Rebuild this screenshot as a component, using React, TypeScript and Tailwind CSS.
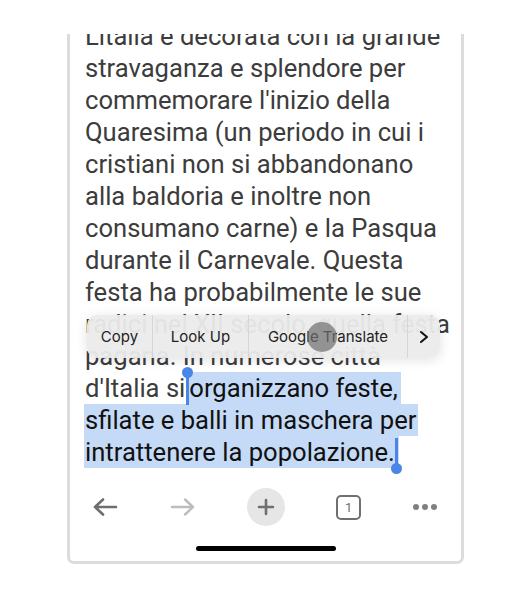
const LINES = [
  'Litalia e decorata con la grande',
  'stravaganza e splendore per',
  "commemorare l'inizio della",
  'Quaresima (un periodo in cui i',
  'cristiani non si abbandonano',
  'alla baldoria e inoltre non',
  'consumano carne) e la Pasqua',
  'durante il Carnevale. Questa',
  'festa ha probabilmente le sue',
  'radici nel XII secolo, quella festa',
  'pagana. In numerose città',
];

function Toolbar() {
  return (
    <div className="flex items-center justify-between h-[78px] pl-[23px] pr-[24px]">
      <svg width="25" height="24" viewBox="0 0 25 24" fill="none" stroke="#6f6f6f" strokeWidth="2.6" strokeLinecap="round" strokeLinejoin="round">
        <path d="M2 12h21M10 4.5L2 12l8 7.5" />
      </svg>
      <svg width="25" height="24" viewBox="0 0 25 24" fill="none" stroke="#bdbdbd" strokeWidth="2.4" strokeLinecap="round" strokeLinejoin="round">
        <path d="M2 12h21M15 4.5l8 7.5-8 7.5" />
      </svg>
      <div className="w-[38px] h-[38px] rounded-full bg-[#e6e6e6] flex items-center justify-center">
        <svg width="20" height="20" viewBox="0 0 20 20" fill="none" stroke="#6f6f6f" strokeWidth="2.6" strokeLinecap="round">
          <path d="M10 3v14M3 10h14" />
        </svg>
      </div>
      <div className="w-[25px] h-[25px] rounded-[5px] border-2 border-[#707070] flex items-center justify-center text-[13px] leading-none text-[#707070] font-['Roboto',sans-serif]">
        1
      </div>
      <div className="flex gap-[3px] w-[24px]">
        <span className="w-[6px] h-[6px] rounded-full bg-[#808080]" />
        <span className="w-[6px] h-[6px] rounded-full bg-[#808080]" />
        <span className="w-[6px] h-[6px] rounded-full bg-[#808080]" />
      </div>
    </div>
  );
}

function SelectionMenu() {
  return (
    <div className="absolute left-[17px] top-[281px] w-[353px] h-[43px] flex items-center rounded-[10px] bg-[#ebebeb]/95 shadow-[0_2px_12px_rgba(0,0,0,0.12)] text-[15px] text-[#222] font-['Inter',sans-serif]">
      <div className="w-[66px] h-full flex items-center justify-center border-r border-[#d6d6d6]">Copy</div>
      <div className="w-[96px] h-full flex items-center justify-center border-r border-[#d6d6d6]">Look Up</div>
      <div className="w-[159px] h-full flex items-center justify-center border-r border-[#d6d6d6]">Google Translate</div>
      <div className="flex-1 flex items-center justify-center">
        <svg width="10" height="14" viewBox="0 0 10 14" fill="none" stroke="#111" strokeWidth="2" strokeLinecap="round" strokeLinejoin="round">
          <path d="M2 2l6 5-6 5" />
        </svg>
      </div>
      <div className="absolute left-[220px] top-[7px] w-[30px] h-[30px] rounded-full bg-[#6e6e6e]/70" />
    </div>
  );
}

export default function App() {
  return (
    <div className="w-[515px] h-[594px] bg-white pt-[34px] pl-[67px]">
      <div className="relative w-[397px] h-[530px] overflow-hidden border-x-[3px] border-b-[3px] border-[#dcdcdc] rounded-b-[7px] bg-white font-['Roboto',sans-serif] text-[25.6px] leading-[32px] text-[#3c3c3c]">
        <div className="-mt-[14px] pl-[15px] whitespace-nowrap">
          {LINES.map((line) => (
            <div key={line} className="h-[32px]">{line}</div>
          ))}
          <div className="h-[32px]">
            d'Italia si<span className="ml-[4px] inline-block h-[32px] bg-[#c5daf6] text-[#111] pr-[3px]">organizzano feste,</span>
          </div>
          <div className="h-[32px] -ml-[1px]">
            <span className="inline-block h-[32px] bg-[#c5daf6] text-[#111] pl-[1px] pr-[2px]">sfilate e balli in maschera per</span>
          </div>
          <div className="h-[32px] -ml-[1px]">
            <span className="inline-block h-[32px] bg-[#c5daf6] text-[#111] pl-[1px] pr-[4px]">intrattenere la popolazione.</span>
          </div>
        </div>

        <Toolbar />
        <div className="mx-auto w-[140px] h-[5px] rounded-full bg-black" />

        <SelectionMenu />

        {/* selection handles */}
        <div className="absolute left-[116px] top-[338px] w-[3px] h-[33px] bg-[#4a86e8]" />
        <div className="absolute left-[112px] top-[333px] w-[11px] h-[11px] rounded-full bg-[#4a86e8]" />
        <div className="absolute left-[325px] top-[404px] w-[3px] h-[30px] bg-[#4a86e8]" />
        <div className="absolute left-[321px] top-[429px] w-[11px] h-[11px] rounded-full bg-[#4a86e8]" />
      </div>
    </div>
  );
}
